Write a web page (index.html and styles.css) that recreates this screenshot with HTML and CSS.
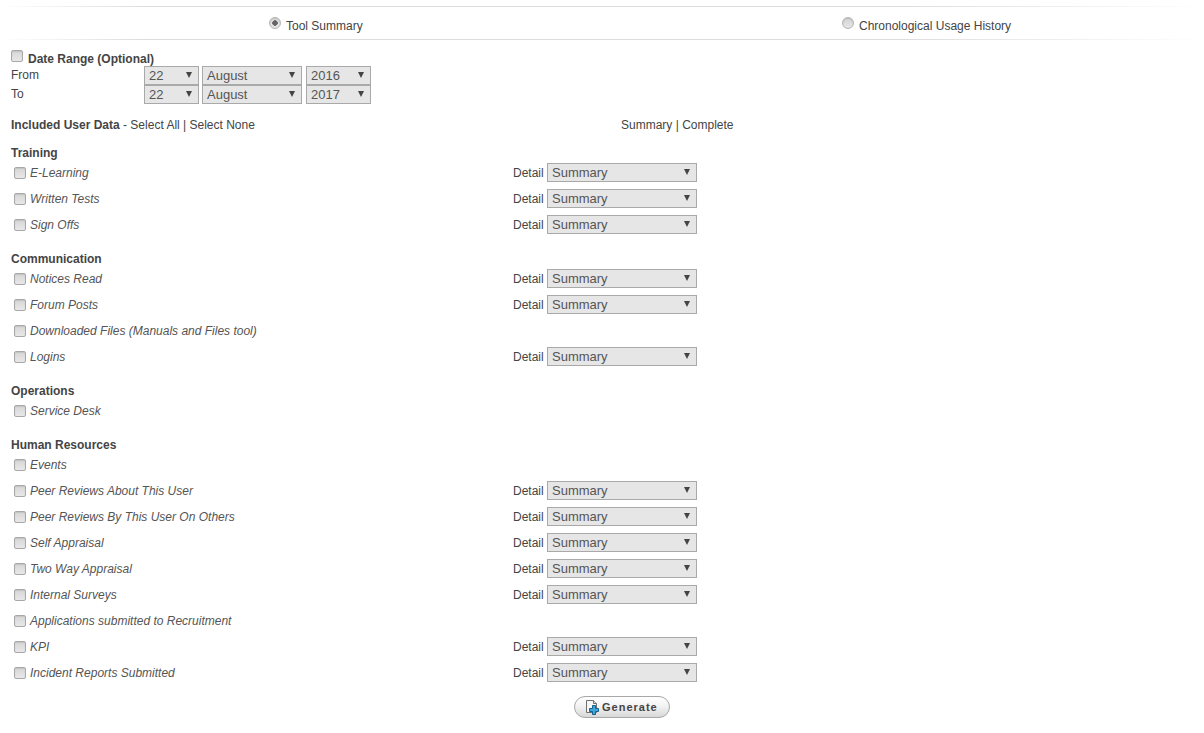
FILE: index.html
```html
<!DOCTYPE html>
<html lang="en">
<head>
<meta charset="utf-8">
<title>User Report</title>
<link rel="stylesheet" href="styles.css">
</head>
<body>
<div class="tabs">
  <label class="tab"><span class="radio on"></span><span class="tab-text">Tool Summary</span></label>
  <label class="tab"><span class="radio"></span><span class="tab-text">Chronological Usage History</span></label>
</div>

<div class="range-title"><span class="check big"></span><b>Date Range (Optional)</b></div>
<div class="date-row">
  <span class="date-label">From</span>
  <span class="sel w-day">22</span><span class="sel w-month">August</span><span class="sel w-year">2016</span>
</div>
<div class="date-row">
  <span class="date-label">To</span>
  <span class="sel w-day">22</span><span class="sel w-month">August</span><span class="sel w-year">2017</span>
</div>

<div class="included">
  <div><b>Included User Data</b> - Select All | Select None</div>
  <div>Summary | Complete</div>
</div>

<h4>Training</h4>
<div class="row"><span class="check"></span><i>E-Learning</i><span class="detail">Detail</span><span class="sel w-detail">Summary</span></div>
<div class="row"><span class="check"></span><i>Written Tests</i><span class="detail">Detail</span><span class="sel w-detail">Summary</span></div>
<div class="row"><span class="check"></span><i>Sign Offs</i><span class="detail">Detail</span><span class="sel w-detail">Summary</span></div>

<h4>Communication</h4>
<div class="row"><span class="check"></span><i>Notices Read</i><span class="detail">Detail</span><span class="sel w-detail">Summary</span></div>
<div class="row"><span class="check"></span><i>Forum Posts</i><span class="detail">Detail</span><span class="sel w-detail">Summary</span></div>
<div class="row"><span class="check"></span><i>Downloaded Files (Manuals and Files tool)</i></div>
<div class="row"><span class="check"></span><i>Logins</i><span class="detail">Detail</span><span class="sel w-detail">Summary</span></div>

<h4>Operations</h4>
<div class="row"><span class="check"></span><i>Service Desk</i></div>

<h4>Human Resources</h4>
<div class="row"><span class="check"></span><i>Events</i></div>
<div class="row"><span class="check"></span><i>Peer Reviews About This User</i><span class="detail">Detail</span><span class="sel w-detail">Summary</span></div>
<div class="row"><span class="check"></span><i>Peer Reviews By This User On Others</i><span class="detail">Detail</span><span class="sel w-detail">Summary</span></div>
<div class="row"><span class="check"></span><i>Self Appraisal</i><span class="detail">Detail</span><span class="sel w-detail">Summary</span></div>
<div class="row"><span class="check"></span><i>Two Way Appraisal</i><span class="detail">Detail</span><span class="sel w-detail">Summary</span></div>
<div class="row"><span class="check"></span><i>Internal Surveys</i><span class="detail">Detail</span><span class="sel w-detail">Summary</span></div>
<div class="row"><span class="check"></span><i>Applications submitted to Recruitment</i></div>
<div class="row"><span class="check"></span><i>KPI</i><span class="detail">Detail</span><span class="sel w-detail">Summary</span></div>
<div class="row"><span class="check"></span><i>Incident Reports Submitted</i><span class="detail">Detail</span><span class="sel w-detail">Summary</span></div>

<div class="actions">
  <button class="generate" type="button">
    <svg class="gen-icon" width="16" height="16" viewBox="0 0 16 16" aria-hidden="true">
      <path d="M1.500 1.500h7l3 3v9h-10z" fill="#f6f6f6" stroke="#6f6f6f"/>
      <path d="M8.500 1.500v3h3" fill="#d8d8d8" stroke="#6f6f6f"/>
      <path d="M7.500 6.500h3v3h3v3h-3v3h-3v-3h-3v-3h3z" fill="#3aa6dc" stroke="#17608c"/>
    </svg>Generate
  </button>
</div>
</body>
</html>
```

FILE: styles.css
```css
* { box-sizing: border-box; }
html, body { margin: 0; padding: 0; }
body {
  width: 1204px;
  height: 733px;
  overflow: hidden;
  background: #fff;
  color: #444;
  font: 12px/14px "Liberation Sans", Arial, sans-serif;
}
b { font-weight: bold; }
.tabs {
  display: grid;
  grid-template-columns: 573px 1fr;
  height: 34px;
  margin-top: 6px;
  padding: 11px 0 0 269px;
  border-style: solid;
  border-width: 1px 0;
  border-image: linear-gradient(to right, #fff 0, #ddd 12%, #ddd 75%, #fff 100%) 1;
}
.tab { display: flex; align-items: flex-start; }
.tab-text { margin-top: 1px; }
.radio {
  width: 12px;
  height: 12px;
  margin: -1px 5px 0 0;
  border-radius: 50%;
  border: 1px solid #b4b4b4;
  background: linear-gradient(#d4d4d4, #e6e6e6);
  box-shadow: inset 0 1px 1px #bbb;
}
.radio.on { background: radial-gradient(circle, #666 0 2.500px, #e4e4e4 3px); }
.range-title {
  display: flex;
  height: 16px;
  margin: 10px 0 0 11px;
  align-items: flex-start;
}
.range-title b { margin-top: 2px; }
.check {
  flex: none;
  width: 12px;
  height: 12px;
  border: 1px solid #a8a8a8;
  border-radius: 2px;
  background: linear-gradient(#d6d6d6, #e8e8e8);
  box-shadow: inset 0 1px 1px #c4c4c4;
}
.check.big { margin-right: 5px; }
.date-row {
  display: flex;
  height: 19px;
  padding-left: 11px;
}
.date-label { width: 133px; margin-top: 2px; }
.sel {
  position: relative;
  display: block;
  height: 19px;
  padding-left: 4px;
  border: 1px solid #a9a9a9;
  background: #e6e6e6;
  color: #555;
  font-size: 13px;
  line-height: 18px;
}
.sel::after {
  content: "";
  position: absolute;
  top: 5px;
  right: 6px;
  border-style: solid;
  border-width: 6px 3px 0;
  border-color: #444 transparent transparent;
}
.w-day { width: 55px; margin-right: 3px; }
.w-month { width: 100px; margin-right: 4px; }
.w-year { width: 65px; }
.w-detail { width: 150px; margin: 0 0 2px 3px; }
.included {
  display: grid;
  grid-template-columns: 610px 1fr;
  margin: 14px 0 0 11px;
}
h4 {
  margin: 14px 0 0 11px;
  height: 14px;
  font-size: 12px;
  line-height: 14px;
  font-weight: bold;
}
.row {
  display: flex;
  align-items: center;
  height: 26px;
  padding-left: 14px;
}
.row i { width: 487px; padding-left: 4px; color: #555; }
.detail { width: 31px; }
.actions { display: flex; padding-left: 574px; margin-top: 10px; }
.generate {
  display: flex;
  align-items: center;
  width: 96px;
  height: 22px;
  padding: 0 0 0 10px;
  border: 1px solid #a8a8a8;
  border-radius: 12px;
  background: linear-gradient(#fff 0, #f3f3f3 45%, #d8d8d8 100%);
  color: #444;
  font: bold 11px/14px "Liberation Sans", Arial, sans-serif;
  letter-spacing: 1px;
}
.gen-icon { flex: none; margin-right: 1px; }
```
